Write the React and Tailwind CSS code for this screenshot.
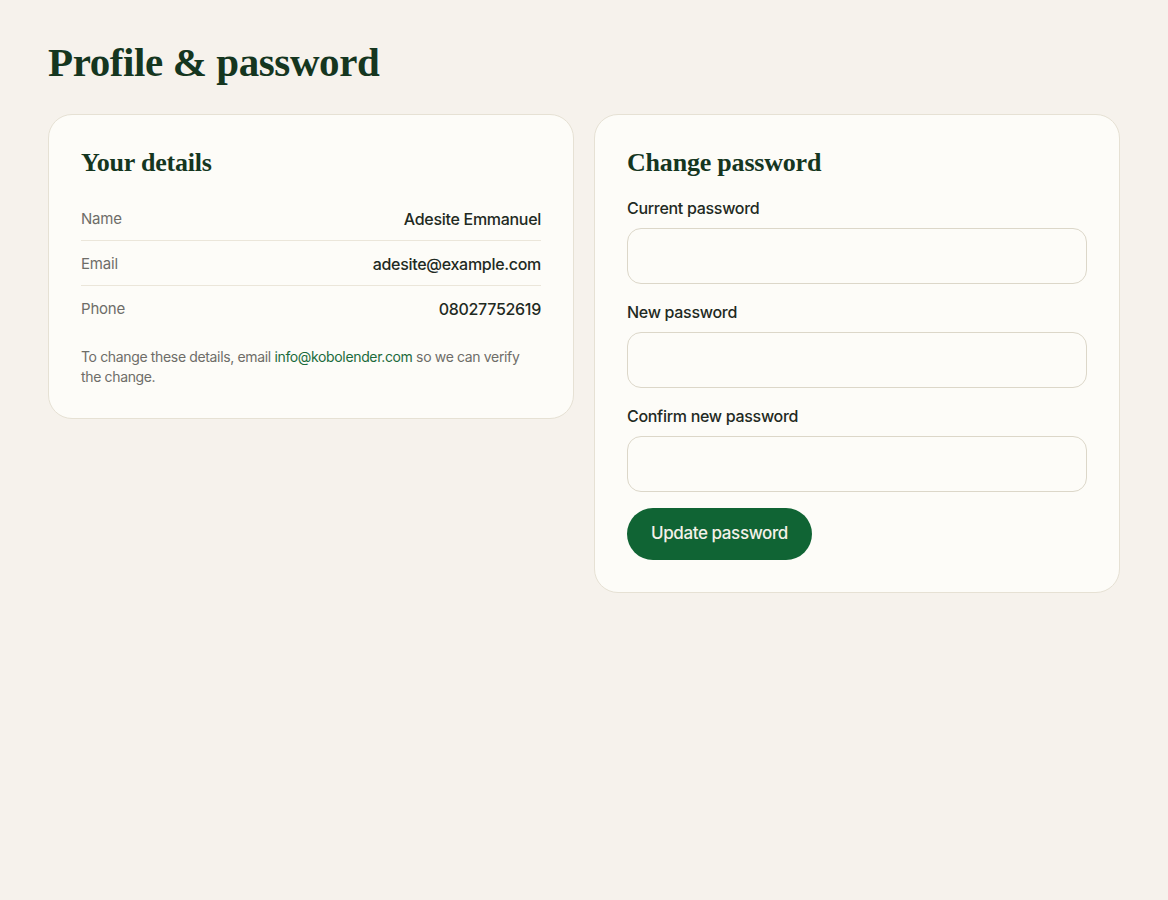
import React from 'react';

const serif = { fontFamily: '"Liberation Serif", "DejaVu Serif", serif' };

const DetailRow = ({ label, value, last }) => (
    <div className={`flex items-center justify-between pt-[12px] pb-[10px] ${last ? '' : 'border-b border-[#ebe6da]'}`}>
        <span className="text-[15px] leading-[22px] text-[#6e6d68] tracking-[-0.2px]">{label}</span>
        <span className="text-[16px] leading-[22px] font-medium text-[#1f2a23] tracking-[-0.3px]">{value}</span>
    </div>
);

const Field = ({ label }) => (
    <div className="flex flex-col">
        <label className="text-[16px] leading-[24px] font-medium text-[#1f2a23] mb-2 tracking-[-0.3px]">{label}</label>
        <input
            type="password"
            className="h-[56px] w-full rounded-[14px] border border-[#dcd7c9] bg-[#fdfcf8] px-4 outline-none"
        />
    </div>
);

const App = () => {
    return (
        <div
            className="min-h-screen bg-[#f6f2ec] px-12 pt-10"
            style={{ fontFamily: '"Inter", "Noto Sans", sans-serif' }}
        >
            <h1 className="text-[41px] leading-[44px] font-bold tracking-[-0.4px] text-[#15361f] mb-[30px]" style={serif}>
                Profile &amp; password
            </h1>

            <div className="grid grid-cols-2 gap-5 items-start">
                <div className="rounded-[24px] border border-[#e6e1d4] bg-[#fdfcf8] px-8 pt-8 pb-[31px]">
                    <h2 className="text-[26px] leading-[32px] font-bold tracking-[-0.2px] text-[#15361f] mb-[17px]" style={serif}>
                        Your details
                    </h2>
                    <DetailRow label="Name" value="Adesite Emmanuel" />
                    <DetailRow label="Email" value="adesite@example.com" />
                    <DetailRow label="Phone" value="08027752619" last />
                    <p className="mt-[17px] text-[14px] leading-[20px] text-[#6e6d68] tracking-[-0.35px]">
                        To change these details, email{' '}
                        <a href="#" className="text-[#1b6b3c]">info@kobolender.com</a>{' '}
                        so we can verify the change.
                    </p>
                </div>

                <div className="rounded-[24px] border border-[#e6e1d4] bg-[#fdfcf8] p-8">
                    <h2 className="text-[26px] leading-[32px] font-bold tracking-[-0.2px] text-[#15361f] mb-[17px]" style={serif}>
                        Change password
                    </h2>
                    <div className="flex flex-col gap-4">
                        <Field label="Current password" />
                        <Field label="New password" />
                        <Field label="Confirm new password" />
                        <div>
                            <button className="h-[52px] rounded-full bg-[#106434] px-6 text-[17px] font-medium tracking-[-0.4px] text-[#f4f1e8]">
                                Update password
                            </button>
                        </div>
                    </div>
                </div>
            </div>
        </div>
    );
};

export default App;
